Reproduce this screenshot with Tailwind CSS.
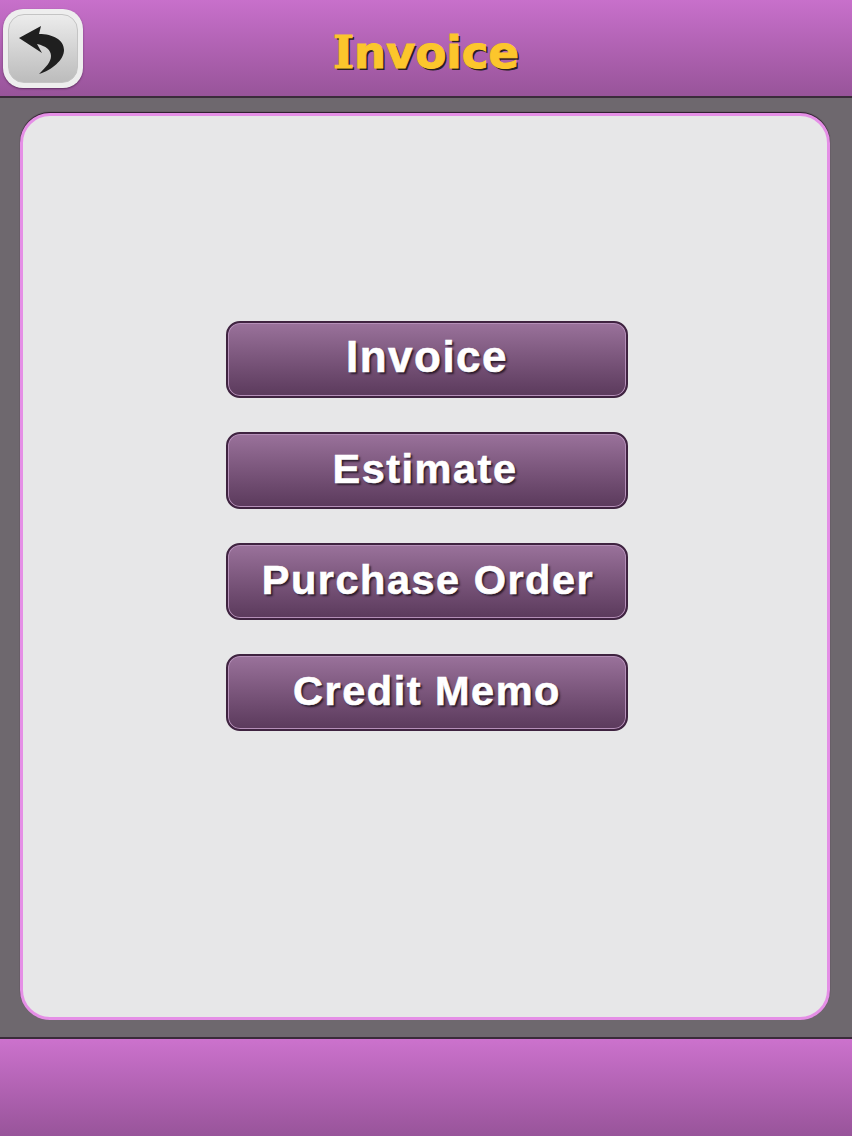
<!DOCTYPE html>
<html lang="en">
<head>
  <meta charset="UTF-8">
  <meta name="viewport" content="width=device-width, initial-scale=1.0">
  <title>Invoice</title>
  <script src="https://cdn.jsdelivr.net/npm/@tailwindcss/browser@4"></script>
</head>
<body class="bg-[#6e686e] font-['Liberation_Sans',sans-serif]">
  <div class="flex flex-col w-[852px] h-[1136px] overflow-hidden">
    <!-- Header -->
    <header class="relative flex items-center justify-center h-[98px] shrink-0 border-b-2 border-[#3a2c3a] bg-gradient-to-b from-[#c870cb] to-[#98549a]">
      <button class="absolute left-[3px] top-[9px] w-[80px] h-[79px] p-[5px] rounded-[20px] bg-[#eeeeee] shadow-[0_1px_2px_rgba(60,20,60,0.6)]">
        <span class="flex items-center justify-center w-full h-full rounded-[16px] border border-[#c4c4c4] bg-gradient-to-b from-[#ececec] to-[#bcbcbc]">
          <svg width="50" height="62" viewBox="18 18 50 62" class="shrink-0">
            <path d="M41 26 L39 34 C53 34 64 40 64 50 C64 60 52 70 39 74 C46 67 51 62 51 56 C51 50 46 46 37 44 L42 53 L19 38 Z" fill="#1f1f1f"/>
          </svg>
        </span>
      </button>
      <h1 class="font-['DejaVu_Sans',sans-serif] font-bold text-[45px] leading-none text-[#fcc62c] [-webkit-text-stroke:1px_#fcc62c] [text-shadow:2px_2px_0_#2a2020] mt-[9px]"><span class="font-['DejaVu_Serif',serif]">I</span>nvoice</h1>
    </header>

    <!-- Content -->
    <main class="flex-1 pl-[20px] pr-[22px] pt-[15px] pb-[17px] border-b-2 border-[#3a2c3a]">
      <div class="flex flex-col items-center h-full pl-[4px] pt-[205px] gap-[34px] rounded-[30px] bg-[#e7e7e8] border-[3px] border-[#e58fe6] shadow-[0_-1px_1px_#2a1a2a]">
        <button class="w-[402px] h-[77px] pb-[6px] rounded-[14px] border-2 border-[#3f2340] bg-gradient-to-b from-[#9a729b] to-[#5b3a5c] shadow-[inset_0_0_0_1px_#b58fb8] text-white text-[44px] font-bold tracking-[1.5px] [-webkit-text-stroke:0.6px_white] [text-shadow:2px_2px_2px_#2a1a2a]">Invoice</button>
        <button class="w-[402px] h-[77px] pb-[3px] pr-[4px] rounded-[14px] border-2 border-[#3f2340] bg-gradient-to-b from-[#9a729b] to-[#5b3a5c] shadow-[inset_0_0_0_1px_#b58fb8] text-white text-[41.5px] font-bold tracking-[1.5px] [-webkit-text-stroke:0.6px_white] [text-shadow:2px_2px_2px_#2a1a2a]">Estimate</button>
        <button class="w-[402px] h-[77px] pb-[3px] pl-[2px] rounded-[14px] border-2 border-[#3f2340] bg-gradient-to-b from-[#9a729b] to-[#5b3a5c] shadow-[inset_0_0_0_1px_#b58fb8] text-white text-[41.5px] font-bold tracking-[1.5px] [-webkit-text-stroke:0.6px_white] [text-shadow:2px_2px_2px_#2a1a2a]">Purchase Order</button>
        <button class="w-[402px] h-[77px] pb-[3px] rounded-[14px] border-2 border-[#3f2340] bg-gradient-to-b from-[#9a729b] to-[#5b3a5c] shadow-[inset_0_0_0_1px_#b58fb8] text-white text-[41.5px] font-bold tracking-[1.5px] [-webkit-text-stroke:0.6px_white] [text-shadow:2px_2px_2px_#2a1a2a]">Credit Memo</button>
      </div>
    </main>

    <!-- Footer -->
    <footer class="h-[97px] shrink-0 bg-gradient-to-b from-[#cc72cd] to-[#98549a]"></footer>
  </div>
</body>
</html>
